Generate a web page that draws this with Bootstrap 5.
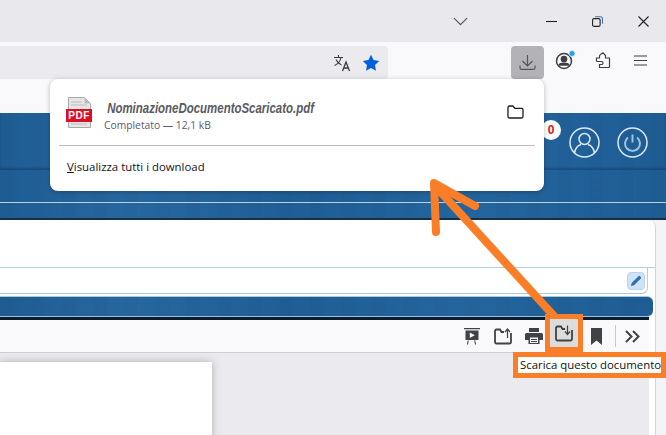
<!doctype html>
<html lang="it">
<head>
<meta charset="utf-8">
<title>Download</title>
<link href="https://cdn.jsdelivr.net/npm/bootstrap@5.3.0/dist/css/bootstrap.min.css" rel="stylesheet">
<style>
html,body{width:666px;height:435px;overflow:hidden;margin:0}
body{font-family:"Open Sans","Noto Sans",sans-serif;background:#f4f4f8;position:relative}
.tabstrip{height:42px;background:#e9e9ed;color:#3a3a3f}
.tabstrip svg,.navstrip svg{display:block}
.chev-slot{padding:0 0 0 453px;width:530px}
.winbtn{width:47px;display:flex;justify-content:center}
.navstrip{height:37px;background:#f9f9fb;padding-top:4px}
.urlbar{width:388px;height:33px;background:#ebebef;border-radius:0 4px 4px 0;padding-right:8px;gap:11px}
.dlbtn{width:33px;height:33px;background:#b2b2b7;border-radius:4px;margin-left:123px}
.acct-slot{width:24px;margin-left:10px}
.ext-slot{width:32px;margin-left:9px}
.menu-slot{width:42px}
.bookstrip{height:34px;background:#f9f9fb}
.bluetex{background-color:#20629c;background-image:linear-gradient(90deg,rgba(0,0,0,.05),rgba(255,255,255,.03) 20%,rgba(0,0,0,.04) 45%,rgba(255,255,255,.02) 70%,rgba(0,0,0,.05)),repeating-linear-gradient(90deg,rgba(0,0,0,.02) 0 14px,transparent 14px 31px)}
.head-top{height:57px;box-shadow:inset 0 -2px 2px rgba(0,20,50,.25);padding-right:18px;padding-top:2px;gap:17px}
.ring{width:31px;height:31px;display:block}
.head-mid{height:33px;border-bottom:1px solid #b9d2e4}
.head-low{height:17px;border-bottom:2px solid #17304a}
.workarea{height:215px;padding-right:10px}
.panelbox{height:100%;background:#fff;border-right:1px solid #c8d8e4;border-top-right-radius:7px;padding-right:6px;overflow:hidden}
.blank-zone{height:48px;border-bottom:1px solid #b4cfe0;margin-right:-6px}
.field-zone{height:26px;border-bottom:1px solid #a9c9dc;border-right:1px solid #b4cfe0;border-bottom-right-radius:6px;padding-right:2px;margin-right:1px}
.pencil{width:18px;height:18px;background:#cfe2fa;border:1px solid #bcd3ec;border-radius:4px}
.bar-zone{height:21px;margin-top:2px;border-top:1px solid #a9cbe0;border-bottom:1px solid #9ec1d8;border-radius:0 6px 6px 0;margin-right:-4px}
.tool-zone{height:36px;border-top:3px solid #0b1e2f;background:#f9f9fb;border-bottom:1px solid #cfcfd3}
.doc-zone{height:200px;background:#ebebef;padding-top:9px}
.sheet{width:212px;height:120px;background:#fff;box-shadow:0 0 8px rgba(60,60,70,.35)}
.tool-ico{width:31px;display:flex;justify-content:center}
.hl-slot{width:32px}
.mark-slot{width:30px}
.more-slot{width:33px}
.tool-gap{width:1px;height:22px;background:#c9c9cd}
/* overlays */
.dl-pop{position:absolute;left:50px;top:79px;width:494px;height:112px;background:#fff;border-radius:8px;box-shadow:0 1px 5px rgba(0,0,0,.25);z-index:5;padding:0 9px}
.dl-row{height:66px;padding:0 11px 0 7px}
.dl-text{padding-top:8px;margin-left:3px}
.fname{font-family:"Liberation Sans",sans-serif;font-style:italic;font-weight:700;font-size:14.5px;line-height:17px;color:#5a5a5f;padding-left:4px;transform:scaleX(.79);transform-origin:0 50%;white-space:nowrap}
.fstat{font-size:10.3px;line-height:16px;color:#5b5b66}
.dl-sep{height:1px;background:#bcbcc0}
.dl-all{height:41px;padding-left:8px;font-size:11.4px;color:#15141a}
.notif{position:absolute;left:541px;top:120px;width:20px;height:20px;border-radius:50%;background:#fff;color:#d7141a;font:700 12px/20px "Liberation Sans",sans-serif;text-align:center;z-index:3}
.pointer{position:absolute;left:0;top:0;z-index:7;pointer-events:none}
.hl-btn{position:absolute;left:545px;top:314px;width:38px;height:38px;border:5px solid #f97e27;background:#dcdcdc;z-index:8;display:flex;align-items:center;justify-content:center}
.tip-box{position:absolute;left:513px;top:352px;width:153px;height:26px;border:5px solid #f97e27;background:#fff;z-index:8;padding-left:2px;font-size:11.4px;line-height:16px;color:#111;white-space:nowrap;overflow:hidden}
</style>
</head>
<body>
<div class="tabstrip d-flex align-items-center">
  <div class="chev-slot"><svg width="15" height="9" viewBox="0 0 15 9" fill="none" stroke="#55555a" stroke-width="1.2"><path d="M1 1.2l6.500 6.500 6.500-6.500"/></svg></div>
  <div class="winbtn"><svg width="11" height="11" viewBox="0 0 11 11" stroke="#222" stroke-width="1.1"><path d="M0 5.500h11"/></svg></div>
  <div class="winbtn"><svg width="11" height="11" viewBox="0 0 11 11" fill="none" stroke="#222" stroke-width="1.1"><rect x=".6" y="2.600" width="7.500" height="7.800" rx="1.500"/><path d="M3 .8h5.500a2 2 0 0 1 2 2v5" stroke="#3b76b0"/></svg></div>
  <div class="winbtn"><svg width="11" height="11" viewBox="0 0 11 11" stroke="#222" stroke-width="1.1"><path d="M.5.500l10 10M10.500.500l-10 10"/></svg></div>
</div>

<div class="navstrip d-flex align-items-start">
  <div class="urlbar d-flex align-items-center justify-content-end">
    <svg width="18" height="18" viewBox="0 0 18 18" fill="none" stroke="#3a3a40" stroke-width="1.100"><path d="M1 3.500h9M5.500 1v2.500M8 3.500c-.8 4-3 6.500-6.500 8M3 5.500c1 2.500 3 4.500 5.500 5.500"/><path d="M9.500 17l3.500-9 3.500 9M10.700 14h4.600" stroke-width="1.300"/></svg>
    <svg width="18" height="18" viewBox="0 0 18 18"><path fill="#0060df" d="M9 .8l2.500 5.300 5.700.8-4.200 4 1 5.800L9 14.100l-5 2.600 1-5.800-4.200-4 5.700-.8z"/></svg>
  </div>
  <div class="dlbtn d-flex align-items-center justify-content-center">
    <svg width="17" height="17" viewBox="0 0 17 17" fill="none" stroke="#55555b" stroke-width="1.200"><path d="M8.500 1v10.500M3.500 7l5 5 5-5M1 11.500v2.300a1.500 1.500 0 0 0 1.500 1.500h12a1.500 1.500 0 0 0 1.500-1.500v-2.300"/></svg>
  </div>
  <div class="d-flex align-items-center navtools">
    <div class="acct-slot d-flex justify-content-center py-1">
      <svg width="24" height="20" viewBox="0 0 24 20" fill="none" stroke="#3f3f45" stroke-width="1.500"><circle cx="10" cy="11" r="7.500"/><circle cx="10" cy="9" r="2.600" fill="#3f3f45"/><path d="M5 15c1.200-2.500 8.800-2.500 10 0z" fill="#3f3f45"/><circle cx="18" cy="3.500" r="3" fill="#1ea4ee" stroke="#f9f9fb" stroke-width=".7"/></svg>
    </div>
    <div class="ext-slot d-flex justify-content-center">
      <svg width="16" height="16" viewBox="0 0 16 16" fill="none" stroke="#3f3f45" stroke-width="1.200"><path d="M1.500 6h3V4.300a2 2 0 0 1 1-1.800L8 .8l2.500 2.700V6h4v8.500a1 1 0 0 1-1 1h-9v-3H6.500a1.500 1.500 0 0 0 0-3H2a.8.8 0 0 1-.5-.7z"/></svg>
    </div>
    <div class="menu-slot d-flex justify-content-center">
      <svg width="13" height="11" viewBox="0 0 13 11" stroke="#3f3f45" stroke-width="1.200"><path d="M0 1h13M0 5.500h13M0 10h13"/></svg>
    </div>
  </div>
</div>

<div class="bookstrip"></div>

<div class="bluetex head-top d-flex align-items-center justify-content-end">
  <svg class="ring" viewBox="0 0 31 31" fill="none" stroke="#dcebf6" stroke-width="1.500"><circle cx="15.500" cy="15.500" r="14.500"/><circle cx="15.500" cy="12" r="5.500"/><path d="M5.500 26c1-6 5-8 6.500-8.500M25.500 26c-1-6-5-8-6.500-8.500"/></svg>
  <svg class="ring" viewBox="0 0 31 31" fill="none" stroke="#dcebf6" stroke-width="1.500"><circle cx="15.500" cy="15.500" r="14.500"/><path d="M11 10.500a7.500 7.500 0 1 0 9 0M15.500 7.500v8" stroke="#9cc3e2" stroke-width="2"/></svg>
</div>
<div class="bluetex head-mid"></div>
<div class="bluetex head-low"></div>

<div class="workarea">
  <div class="panelbox">
    <div class="blank-zone"></div>
    <div class="field-zone d-flex align-items-center justify-content-end">
      <div class="pencil d-flex align-items-center justify-content-center">
        <svg width="11" height="11" viewBox="0 0 11 11"><path fill="#2f6fa8" d="M0 11l.7-3L7.500 1.200a1 1 0 0 1 1.400 0l.9.900a1 1 0 0 1 0 1.400L3 10.300z"/></svg>
      </div>
    </div>
    <div class="bluetex bar-zone"></div>
    <div class="tool-zone d-flex align-items-center justify-content-end">
      <div class="tool-ico"><svg width="16" height="17" viewBox="0 0 16 17"><path fill="#3f4246" d="M0 0h16v1.300H0zM1.500 2.500h13v9.500h-13zM3 16.500l.7-4h1.100L4 16.500zM12 16.500l-.7-4h-1.100l.8 4z"/><path fill="#f9f9fb" d="M5.800 4.500l5 2.800-5 2.800z"/></svg></div>
      <div class="tool-ico"><svg width="18" height="17" viewBox="0 0 18 17" fill="none" stroke="#3f4246" stroke-width="1.800"><path d="M10 4H7.500L6 1.500H2.500a1.500 1.500 0 0 0-1.500 1.500v11a1.500 1.500 0 0 0 1.500 1.500h13a1.500 1.500 0 0 0 1.500-1.500V5"/><path d="M13.500 10V1.500M11 4l2.500-3 2.500 3" stroke-width="1.200"/></svg></div>
      <div class="tool-ico"><svg width="18" height="16" viewBox="0 0 18 16"><path fill="#3f4246" d="M4 0h10v4H4zM1.500 5h15A1.500 1.500 0 0 1 18 6.500V12h-3.500v4h-11v-4H0V6.500A1.500 1.500 0 0 1 1.500 5z"/><path fill="#f9f9fb" d="M5 9.500h8V15H5z"/><path fill="#3f4246" d="M6 11h6v1H6zM6 13h6v1H6z"/></svg></div>
      <div class="tool-ico hl-slot"></div>
      <div class="tool-ico mark-slot"><svg width="11" height="17" viewBox="0 0 11 17"><path fill="#3f4246" d="M0 0h11v17L5.500 12.500 0 17z"/></svg></div>
      <div class="tool-gap ms-1"></div>
      <div class="tool-ico more-slot"><svg width="15" height="13" viewBox="0 0 15 13" fill="none" stroke="#3f4246" stroke-width="2"><path d="M1 1l5.500 5.500L1 12M8 1l5.500 5.500L8 12"/></svg></div>
    </div>
    <div class="doc-zone"><div class="sheet"></div></div>
  </div>
</div>

<div class="notif">0</div>

<div class="dl-pop d-flex flex-column">
  <div class="dl-row d-flex align-items-center">
    <svg width="27" height="31" viewBox="0 0 27 31" class="flex-shrink-0 me-2"><path fill="#e6e6e6" stroke="#a9a9a9" d="M2.500.5h16l6 6v24h-22z"/><path fill="#bdbdbd" d="M18.500.5v6h6z"/><path stroke="#bcbcbc" d="M5 5h11M5 8h16M5 27h16"/><rect x="0" y="12" width="26" height="13" fill="#db0f26"/><text x="13" y="22.300" text-anchor="middle" font-family="Liberation Sans" font-weight="700" font-size="10" letter-spacing=".5" fill="#fff">PDF</text></svg>
    <div class="flex-grow-1 dl-text">
      <div class="fname">NominazioneDocumentoScaricato.pdf</div>
      <div class="fstat">Completato — 12,1 kB</div>
    </div>
    <svg width="17" height="14" viewBox="0 0 17 14" fill="none" stroke="#1b1b1f" stroke-width="1.300" stroke-linejoin="round"><path d="M1 2.500A1.500 1.500 0 0 1 2.500 1h3.300l2 2.300h6.700a1.500 1.500 0 0 1 1.500 1.500v6.700a1.500 1.500 0 0 1-1.500 1.500h-12A1.500 1.500 0 0 1 1 11.500z"/></svg>
  </div>
  <div class="dl-sep"></div>
  <div class="dl-all d-flex align-items-center"><span><u>V</u>isualizza tutti i download</span></div>
</div>

<svg class="pointer" width="666" height="435" viewBox="0 0 666 435" fill="none" stroke="#f97e27" stroke-linecap="round" stroke-linejoin="round">
  <path d="M554 316L437 188" stroke-width="8"/>
  <path d="M436 232L434 183L475 206" stroke-width="8"/>
</svg>

<div class="hl-btn"><svg width="18" height="17" viewBox="0 0 18 17" fill="none" stroke="#3f4246" stroke-width="1.800"><path d="M10 4H7.500L6 1.500H2.500a1.500 1.500 0 0 0-1.500 1.500v11a1.500 1.500 0 0 0 1.500 1.500h13a1.500 1.500 0 0 0 1.500-1.500V5"/><path d="M12.500 .5V9M10 6.500l2.500 3 2.500-3" stroke-width="1.200"/></svg></div>
<div class="tip-box">Scarica questo documento</div>
</body>
</html>
